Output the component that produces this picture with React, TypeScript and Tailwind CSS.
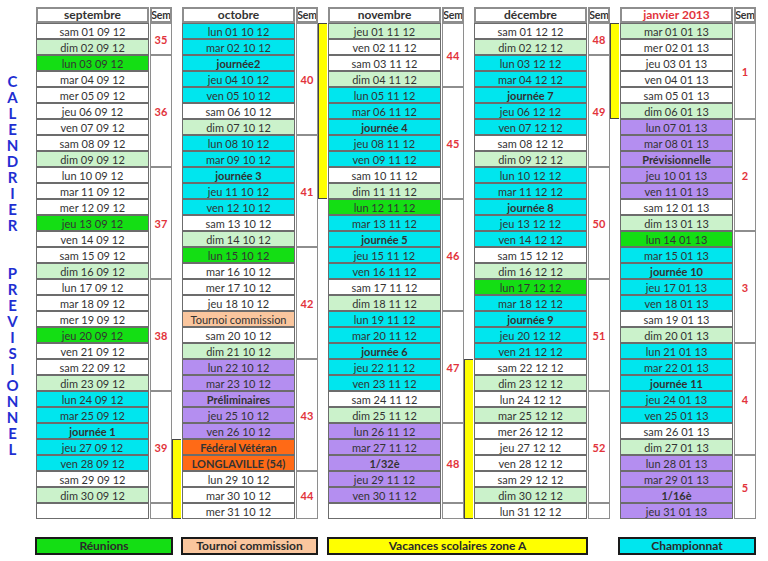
import React from 'react';

const DAYS = ['lun', 'mar', 'mer', 'jeu', 'ven', 'sam', 'dim'];

const BG: Record<string, string> = {
  w: 'bg-white',
  L: 'bg-[#cbf2cb]',
  g: 'bg-[#14de14]',
  c: 'bg-[#00e6ee]',
  p: 'bg-[#b48ef0]',
  o: 'bg-[#ff6a16]',
  t: 'bg-[#fac69e]',
};

const H: Record<number, string> = {
  1: 'h-[16px]',
  2: 'h-[32px]',
  3: 'h-[48px]',
  4: 'h-[64px]',
  5: 'h-[80px]',
  6: 'h-[96px]',
  7: 'h-[112px]',
};

type Month = {
  name: string;
  red?: boolean;
  mm: string;
  yy: string;
  start: number;
  kinds: string;
  labels: Record<number, string>;
  normal?: number[];
  weeks: [string, number][];
};

const MONTHS: Month[] = [
  {
    name: 'septembre',
    mm: '09',
    yy: '12',
    start: 5,
    kinds: 'wLgwwwwwL' + 'wwwgwwL' + 'wwwgwwL' + 'ccccc' + 'wL' + 'w',
    labels: { 26: 'journée 1', 31: '' },
    weeks: [
      ['35', 2],
      ['36', 7],
      ['37', 7],
      ['38', 7],
      ['39', 7],
      ['', 1],
    ],
  },
  {
    name: 'octobre',
    mm: '10',
    yy: '12',
    start: 0,
    kinds: 'cccccwL' + 'cccccwL' + 'gwwwtwL' + 'pppppoo' + 'www',
    labels: {
      3: 'journée2',
      10: 'journée 3',
      19: 'Tournoi commission',
      24: 'Préliminaires',
      27: 'Fédéral Vétéran',
      28: 'LONGLAVILLE (54)',
    },
    normal: [19],
    weeks: [
      ['40', 7],
      ['41', 7],
      ['42', 7],
      ['43', 7],
      ['44', 3],
    ],
  },
  {
    name: 'novembre',
    mm: '11',
    yy: '12',
    start: 3,
    kinds: 'LwwL' + 'cccccwL' + 'gccccwL' + 'cccccwL' + 'ppppp' + 'w',
    labels: { 7: 'journée 4', 14: 'journée 5', 21: 'journée 6', 28: '1/32è', 31: '' },
    weeks: [
      ['44', 4],
      ['45', 7],
      ['46', 7],
      ['47', 7],
      ['48', 5],
      ['', 1],
    ],
  },
  {
    name: 'décembre',
    mm: '12',
    yy: '12',
    start: 5,
    kinds: 'wL' + 'cccccwL' + 'cccccwL' + 'gccccwL' + 'wLwwwwL' + 'w',
    labels: { 5: 'journée 7', 12: 'journée 8', 19: 'journée 9' },
    weeks: [
      ['48', 2],
      ['49', 7],
      ['50', 7],
      ['51', 7],
      ['52', 7],
      ['', 1],
    ],
  },
  {
    name: 'janvier 2013',
    red: true,
    mm: '01',
    yy: '13',
    start: 1,
    kinds: 'LwwwwL' + 'pppppwL' + 'gccccwL' + 'cccccwL' + 'pppp',
    labels: { 9: 'Prévisionnelle', 16: 'journée 10', 23: 'journée 11', 30: '1/16è' },
    weeks: [
      ['1', 6],
      ['2', 7],
      ['3', 7],
      ['4', 7],
      ['5', 4],
    ],
  },
];

function MonthBlock({ m }: { m: Month }) {
  const cells = [];
  for (let d = 1; d <= 31; d++) {
    const kind = m.kinds[d - 1];
    const has = Object.prototype.hasOwnProperty.call(m.labels, d);
    const dd = d < 10 ? '0' + d : String(d);
    const text = has ? m.labels[d] : `${DAYS[(m.start + d - 1) % 7]} ${dd} ${m.mm} ${m.yy}`;
    const bold = has && !(m.normal || []).includes(d);
    cells.push(
      <div
        key={d}
        className={`h-[16px] border border-[#6c6c6c] ${BG[kind]} flex items-center justify-center text-[11px] leading-none text-[#333] whitespace-nowrap ${bold ? 'font-bold' : ''}`}
      >
        {text}
      </div>
    );
  }
  return (
    <div className="flex flex-col">
      <div className="flex gap-px h-[16px]">
        <div
          className={`w-[113px] border-2 border-[#8e8e8e] bg-white flex items-center justify-center font-bold text-[12px] leading-none ${m.red ? 'text-[#e2333b]' : 'text-[#333]'}`}
        >
          {m.name}
        </div>
        <div className="w-[22px] border-2 border-[#8e8e8e] bg-white flex items-center justify-center font-bold text-[10.5px] leading-none text-[#333] tracking-tight overflow-hidden">
          Sem
        </div>
      </div>
      <div className="flex gap-px">
        <div className="w-[113px] flex flex-col">{cells}</div>
        <div className="w-[22px] flex flex-col">
          {m.weeks.map(([w, n], i) => (
            <div
              key={i}
              className={`${H[n]} border border-[#8e8e8e] bg-white flex items-center justify-center font-bold text-[11px] leading-none text-[#e2333b]`}
            >
              {w}
            </div>
          ))}
        </div>
      </div>
    </div>
  );
}

function Gutter({ spacer, bar }: { spacer: string; bar: string }) {
  return (
    <div className="w-[10px] pt-[16px] flex flex-col">
      <div className={spacer} />
      <div className={`${bar} w-[9px] bg-[#ffff00] border-l border-y border-[#444]`} />
    </div>
  );
}

const LABEL1 = 'CALENDRIER'.split('');
const LABEL2 = 'PREVISIONNEL'.split('');

export default function App() {
  return (
    <div className="w-[768px] h-[561px] bg-white pt-[7px] flex flex-col font-['Lato','Open_Sans','Liberation_Sans',sans-serif] overflow-hidden">
      <div className="flex">
        <div className="w-[36px] pt-[67px] flex flex-col items-center text-[#1f2fd2] font-bold text-[15px] leading-[15px] pr-[11px]">
          {LABEL1.map((c, i) => (
            <div key={'a' + i} className="h-[16px]">
              {c}
            </div>
          ))}
          <div className="h-[32px]" />
          {LABEL2.map((c, i) => (
            <div key={'b' + i} className="h-[16px]">
              {c}
            </div>
          ))}
        </div>
        <MonthBlock m={MONTHS[0]} />
        <Gutter spacer="h-[416px]" bar="h-[80px]" />
        <MonthBlock m={MONTHS[1]} />
        <Gutter spacer="h-0" bar="h-[176px]" />
        <MonthBlock m={MONTHS[2]} />
        <Gutter spacer="h-[336px]" bar="h-[160px]" />
        <MonthBlock m={MONTHS[3]} />
        <Gutter spacer="h-0" bar="h-[96px]" />
        <MonthBlock m={MONTHS[4]} />
      </div>
      <div className="flex mt-[18px] text-[12px] font-bold leading-none text-[#2a2a2a]">
        <div className="ml-[35px] w-[138px] h-[18px] border-2 border-[#1a1a1a] bg-[#14de14] flex items-center justify-center">
          Réunions
        </div>
        <div className="ml-[8px] w-[137px] h-[18px] border-2 border-[#1a1a1a] bg-[#fac69e] flex items-center justify-center">
          Tournoi commission
        </div>
        <div className="ml-[9px] w-[261px] h-[18px] border-2 border-[#1a1a1a] bg-[#ffff00] flex items-center justify-center">
          Vacances scolaires zone A
        </div>
        <div className="ml-[30px] w-[138px] h-[18px] border-2 border-[#1a1a1a] bg-[#00e6ee] flex items-center justify-center">
          Championnat
        </div>
      </div>
    </div>
  );
}
